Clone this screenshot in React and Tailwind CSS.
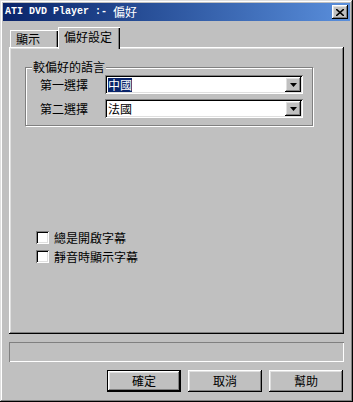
import React from 'react';

const raised = 'shadow-[inset_-1px_-1px_0_#000,inset_1px_1px_0_#fff,inset_-2px_-2px_0_#808080,inset_2px_2px_0_#dfdfdf]';
const sunken = 'shadow-[inset_1px_1px_0_#808080,inset_-1px_-1px_0_#fff,inset_2px_2px_0_#000,inset_-2px_-2px_0_#dfdfdf]';

function Combo({ value, selected }) {
    return (
        <div className={`flex h-[19px] w-[198px] items-center bg-white p-[2px] ${sunken}`}>
            <div className="flex flex-1 items-center pl-[1px]">
                <span className={selected ? 'bg-[#0a246a] text-white leading-[14px]' : 'text-black leading-[14px]'}>{value}</span>
            </div>
            <div className={`flex h-[15px] w-[16px] items-center justify-center bg-[#c0c0c0] ${raised}`}>
                <svg width="7" height="4" viewBox="0 0 7 4"><path d="M0 0h7L3.5 4z" fill="#000" /></svg>
            </div>
        </div>
    );
}

function Check({ label }) {
    return (
        <div className="flex h-[19px] items-center gap-[5px]">
            <div className={`h-[13px] w-[13px] bg-white ${sunken}`} />
            <span>{label}</span>
        </div>
    );
}

function Button({ children, isDefault }) {
    return (
        <div className={`flex h-[22px] w-[74px] items-center justify-center bg-[#c0c0c0] ${isDefault ? 'border border-black' : ''}`}>
            <div className={`flex h-full w-full items-center justify-center ${raised}`}>{children}</div>
        </div>
    );
}

export default function App() {
    return (
        <div
            className="flex h-[402px] w-[353px] flex-col bg-[#c0c0c0] p-[3px] text-[12px] leading-[14px] text-black shadow-[inset_-1px_-1px_0_#000,inset_1px_1px_0_#dfdfdf,inset_-2px_-2px_0_#808080,inset_2px_2px_0_#fff]"
            style={{ fontFamily: '"Noto Sans CJK TC", "Liberation Sans", sans-serif' }}
        >
            {/* title bar */}
            <div className="flex h-[18px] items-center justify-between bg-gradient-to-r from-[#0a246a] to-[#5a8fdc] pl-[2px] pr-[2px]">
                <div className="flex items-center text-white">
                    <span className="whitespace-pre text-[10px] font-bold" style={{ fontFamily: '"Liberation Mono", monospace' }}>ATI DVD Player :- </span>
                    <span>偏好</span>
                </div>
                <div className={`flex h-[14px] w-[16px] items-center justify-center bg-[#c0c0c0] ${raised}`}>
                    <svg width="8" height="7" viewBox="0 0 8 7">
                        <path d="M0 0l8 7M8 0L0 7" stroke="#000" strokeWidth="1.6" />
                    </svg>
                </div>
            </div>

            <div className="flex flex-1 flex-col px-[6px] pt-[6px]">
                {/* tabs */}
                <div className="flex h-[20px] items-end pl-[1px]">
                    <div className="flex h-[17px] w-[48px] items-center pl-[6px] shadow-[inset_1px_1px_0_#fff,inset_-1px_0_0_#000,inset_-2px_0_0_#808080]">顯示</div>
                    <div className="relative z-10 -mb-[2px] flex h-[22px] w-[62px] items-start bg-[#c0c0c0] pl-[6px] pt-[3px] shadow-[inset_1px_1px_0_#fff,inset_-1px_0_0_#000,inset_-2px_0_0_#808080]">偏好設定</div>
                </div>

                {/* panel */}
                <div className={`flex h-[287px] flex-col px-[16px] pt-[20px] ${raised}`}>
                    <div className="relative flex w-[288px] flex-col gap-[5px] border border-[#808080] py-[7px] pl-[14px] shadow-[1px_1px_0_#fff,inset_1px_1px_0_#fff]">
                        <span className="absolute -top-[8px] left-[6px] bg-[#c0c0c0] px-[1px]">較偏好的語言</span>
                        <div className="flex items-center">
                            <span className="w-[65px]">第一選擇</span>
                            <Combo value="中國" selected />
                        </div>
                        <div className="flex items-center">
                            <span className="w-[65px]">第二選擇</span>
                            <Combo value="法國" />
                        </div>
                    </div>

                    <div className="mt-[102px] flex flex-col pl-[11px]">
                        <Check label="總是開啟字幕" />
                        <Check label="靜音時顯示字幕" />
                    </div>
                </div>

                {/* status */}
                <div className="mt-[8px] h-[20px] shadow-[inset_1px_1px_0_#808080,inset_-1px_-1px_0_#fff]" />

                {/* buttons */}
                <div className="mt-[8px] flex justify-end gap-[7px] pr-[1px]">
                    <Button isDefault>確定</Button>
                    <Button>取消</Button>
                    <Button>幫助</Button>
                </div>
            </div>
        </div>
    );
}
